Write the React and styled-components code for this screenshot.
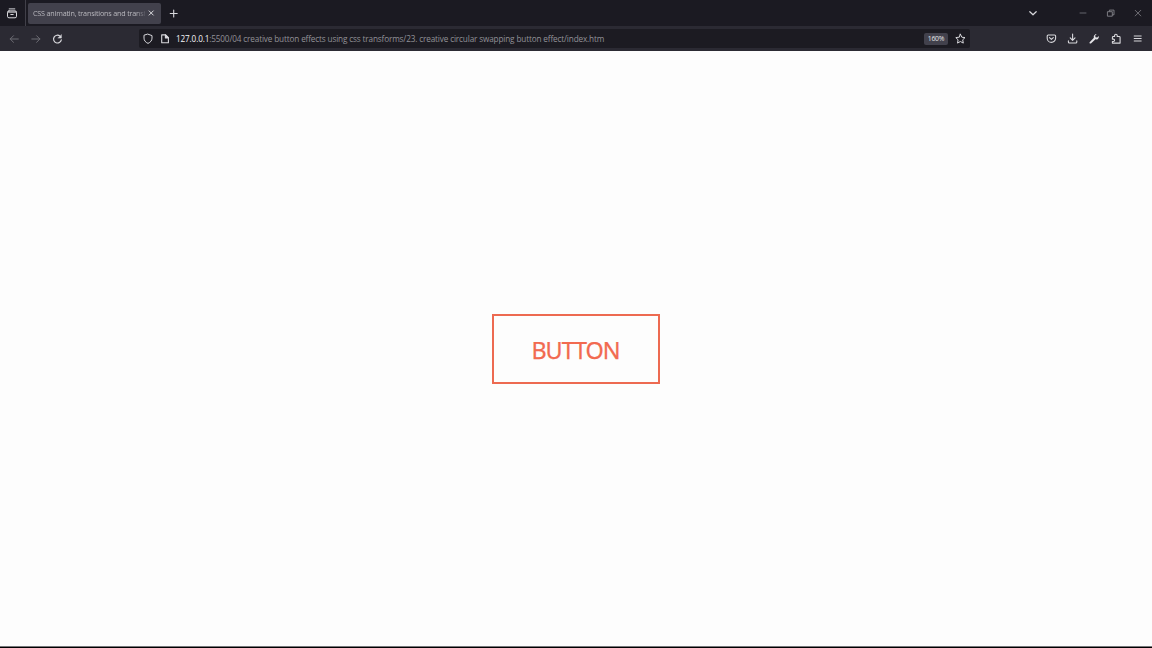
import React from 'react';
import styled, { createGlobalStyle } from 'styled-components';

const GlobalStyle = createGlobalStyle`
  * { box-sizing: border-box; }
  html, body { margin: 0; padding: 0; overflow: hidden; background: #fdfdfd; }
  body { font-family: "Open Sans", "Noto Sans", sans-serif; }
  button { font: inherit; color: inherit; background: none; border: 0; padding: 0; }
`;

const Browser = styled.div`
  display: flex;
  flex-direction: column;
  width: 1152px;
  height: 648px;
  overflow: hidden;
`;

const TabStrip = styled.header`
  display: flex;
  align-items: center;
  height: 26px;
  flex: none;
  background: #1b1a22;
`;

const FirefoxView = styled.div`
  display: flex;
  align-items: center;
  width: 26px;
  height: 26px;
  padding-left: 6px;
  border-right: 1px solid #414049;
`;

const Tab = styled.div`
  display: flex;
  align-items: center;
  width: 133px;
  height: 21px;
  margin-left: 2px;
  padding-left: 5px;
  border-radius: 2px;
  background: #42414c;
  color: #b9b8be;
`;

const TabTitle = styled.span`
  width: 112px;
  overflow: hidden;
  white-space: nowrap;
  font-size: 7.2px;
  line-height: 14px;
  letter-spacing: -0.19px;
  mask-image: linear-gradient(to right, #000 92%, transparent 102%);
`;

const IconButton = styled.button`
  display: flex;
  flex: none;
  align-items: center;
  justify-content: center;
  width: ${(p) => p.$size || 12}px;
  height: ${(p) => p.$size || 12}px;
  margin-left: ${(p) => p.$gap || 0}px;
  color: ${(p) => p.$color || '#d8d8dc'};
  svg { display: block; width: 100%; height: 100%; }
`;

const WindowControls = styled.div`
  display: flex;
  align-items: center;
  margin-left: auto;
  padding-right: 8px;
`;

const Toolbar = styled.nav`
  display: flex;
  align-items: center;
  height: 25px;
  flex: none;
  background: #2b2a33;
`;

const NavButtons = styled.div`
  display: flex;
  align-items: center;
  width: 139px;
  padding-left: 8px;
`;

const AddressBar = styled.div`
  display: flex;
  align-items: center;
  width: 831px;
  height: 19px;
  padding: 0 4px 0 3px;
  border-radius: 2px;
  background: #1c1b22;
`;

const Url = styled.span`
  flex: 1;
  margin-left: 5px;
  white-space: nowrap;
  font-size: 8.2px;
  line-height: 18px;
  color: #929197;
  letter-spacing: -0.145px;
`;

const Host = styled.span`
  color: #f4f4f6;
`;

const Zoom = styled.span`
  width: 24px;
  height: 12px;
  border-radius: 2px;
  background: #42414c;
  color: #e6e6ea;
  font-size: 6.8px;
  line-height: 12px;
  letter-spacing: -0.2px;
  text-align: center;
`;

const ToolbarActions = styled.div`
  display: flex;
  align-items: center;
  margin-left: auto;
  padding-right: 8px;
`;

const Page = styled.main`
  display: flex;
  align-items: center;
  justify-content: center;
  flex: 1;
  background: #fdfdfd;
`;

const SwapButton = styled.button`
  && {
    width: 168px;
    height: 70px;
    border: 2px solid #ed6a51;
    color: #f26a50;
    font-family: "Noto Sans", sans-serif;
    font-size: 23.4px;
    line-height: 32px;
    letter-spacing: -1.05px;
    padding: 2px 1px 0 0;
    -webkit-text-stroke: 0.25px #f26a50;
  }
`;

const Taskbar = styled.footer`
  height: 2px;
  flex: none;
  background: #000;
  border-top: 1px solid #77777a;
`;

const Icon = ({ children, sw = 1.2 }) => (
  <svg viewBox="0 0 12 12" fill="none" stroke="currentColor" strokeWidth={sw} strokeLinecap="round" strokeLinejoin="round">
    {children}
  </svg>
);

export default function App() {
  return (
    <Browser>
      <GlobalStyle />
      <TabStrip>
        <FirefoxView>
          <IconButton aria-label="Firefox View">
            <Icon sw={1}>
              <path d="M3.2 1.9h5.6" />
              <path d="M3 3.9h6a1.5 1.5 0 0 1 1.5 1.5v3.9a1.5 1.5 0 0 1-1.5 1.5H3a1.5 1.5 0 0 1-1.5-1.5V5.4A1.5 1.5 0 0 1 3 3.9z" />
              <path d="M1.7 5.1h8.6M4.8 7.5h2.4" />
            </Icon>
          </IconButton>
        </FirefoxView>
        <Tab>
          <TabTitle>CSS animatin, transitions and transf</TabTitle>
          <IconButton aria-label="Close tab">
            <Icon sw={1}><path d="M4.1 3.9l4.2 4.2M8.3 3.9L4.1 8.1" /></Icon>
          </IconButton>
        </Tab>
        <IconButton $gap={7} aria-label="New tab">
          <Icon sw={1.1}><path d="M5.7 3v7M2.2 6.5h7" /></Icon>
        </IconButton>
        <WindowControls>
          <IconButton aria-label="List tabs">
            <Icon><path d="M2.8 4.7L6 7.8l3.2-3.1" /></Icon>
          </IconButton>
          <IconButton $gap={38} $color="#65646c" aria-label="Minimize">
            <Icon sw={1}><path d="M3 6h6" /></Icon>
          </IconButton>
          <IconButton $gap={16} $color="#85848b" aria-label="Restore">
            <Icon sw={0.9}>
              <path d="M2.8 4.7h4.5v4.5H2.8z" />
              <path d="M4.4 4.2V3.1H9v4.7H7.8" />
            </Icon>
          </IconButton>
          <IconButton $gap={15} $color="#77767d" aria-label="Close">
            <Icon sw={0.9}><path d="M3.2 3.3l5.6 5.6M8.8 3.3L3.2 8.9" /></Icon>
          </IconButton>
        </WindowControls>
      </TabStrip>
      <Toolbar>
        <NavButtons>
          <IconButton $color="#6d6c74" aria-label="Back">
            <Icon sw={1}><path d="M10.3 6H2.2M5.5 2.7L2.2 6l3.3 3.3" /></Icon>
          </IconButton>
          <IconButton $gap={10} $color="#6d6c74" aria-label="Forward">
            <Icon sw={1}><path d="M1.8 6h8.1M6.6 2.7L9.9 6 6.6 9.3" /></Icon>
          </IconButton>
          <IconButton $gap={9} aria-label="Reload">
            <Icon>
              <path d="M10.3 6.8a3.9 3.9 0 1 1-1.3-3.7" />
              <path d="M10.4 1.9v3.2H7.2z" fill="currentColor" strokeWidth="0.5" />
            </Icon>
          </IconButton>
        </NavButtons>
        <AddressBar>
          <IconButton aria-label="Tracking protection">
            <Icon sw={1}><path d="M6 1.2l4 1.4v2.5c0 2.4-1.5 4.2-4 5.3-2.5-1.1-4-2.9-4-5.3V2.6z" /></Icon>
          </IconButton>
          <IconButton $gap={5} aria-label="Site information">
            <Icon sw={1.1}>
              <path d="M2.7 1.9h3.9l2.8 2.8v5.1H2.7z" />
              <path d="M6.4 1.9v3h3z" fill="currentColor" />
            </Icon>
          </IconButton>
          <Url>
            <Host>127.0.0.1</Host>:5500/04 creative button effects using css transforms/23. creative circular swapping button effect/index.htm
          </Url>
          <Zoom>160%</Zoom>
          <IconButton $gap={6} aria-label="Bookmark">
            <Icon sw={1}><path d="M6.4 1.2l1.4 3 3.2.4-2.3 2.2.6 3.3-2.9-1.6-2.9 1.6.6-3.3L1.8 4.6l3.2-.4z" /></Icon>
          </IconButton>
        </AddressBar>
        <ToolbarActions>
          <IconButton aria-label="Save to Pocket">
            <Icon sw={1.1}>
              <path d="M2.2 2h6.4c.6 0 1 .4 1 1v2.2a4.2 4.2 0 0 1-8.4 0V3c0-.6.4-1 1-1z" />
              <path d="M3.5 4.6l1.9 1.8 1.9-1.8" />
            </Icon>
          </IconButton>
          <IconButton $gap={9} aria-label="Downloads">
            <Icon sw={1.1}>
              <path d="M5.6 1.1v6M3.2 4.9l2.4 2.4L8 4.9" />
              <path d="M1.4 7.9V9c0 .6.4 1 1 1h6.4c.6 0 1-.4 1-1V7.9" />
            </Icon>
          </IconButton>
          <IconButton $gap={9} $color="#e4e4e8" aria-label="Developer tools">
            <svg viewBox="0 0 12 12" fill="currentColor">
              <path d="M8.7 1L7.2 2.5l.3 1.7 1.7.3 1.5-1.5c.3 1.2 0 2.3-.8 2.9-.8.6-1.6.7-2.4.4L3.2 10.3c-.4.4-1 .4-1.4.1-.4-.4-.4-1 .1-1.4l4-4.2c-.3-.9-.2-1.8.5-2.6.6-.8 1.4-1.3 2.3-1.2z" />
            </svg>
          </IconButton>
          <IconButton $gap={10} aria-label="Extensions">
            <Icon sw={1.1}>
              <path d="M4.6 3.1v-.5a1.3 1.3 0 0 1 2.6 0v.9h2c.5 0 .9.4.9.9v5.7H2.4V8.5h1a1.2 1.2 0 0 0 0-2.4h-1V4.4c0-.5.4-.9.9-.9h1.3z" />
            </Icon>
          </IconButton>
          <IconButton $gap={10} aria-label="Menu">
            <Icon sw={1}><path d="M2.2 3h7M2.2 5.5h7M2.2 8h7" /></Icon>
          </IconButton>
        </ToolbarActions>
      </Toolbar>
      <Page>
        <SwapButton>BUTTON</SwapButton>
      </Page>
      <Taskbar />
    </Browser>
  );
}
